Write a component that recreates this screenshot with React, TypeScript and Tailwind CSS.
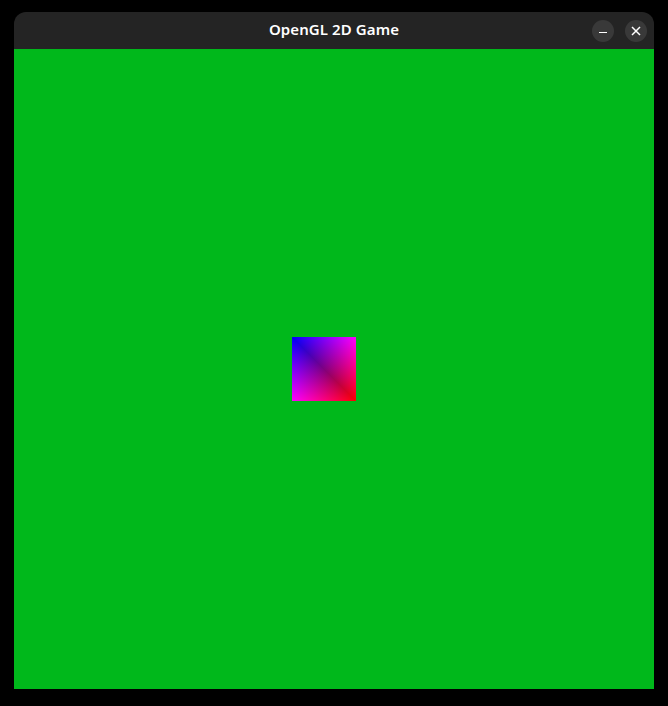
import React from 'react';

const GradientQuad: React.FC = () => {
  // two triangles split along the TL-BR diagonal, like the GL quad
  return (
    <div className="relative w-[64px] h-[64px] bg-[linear-gradient(to_bottom,#000000,#ff0000),linear-gradient(to_right,#0000ff,#000000)] bg-blend-screen">
      <div
        className="absolute inset-0 bg-[linear-gradient(to_right,#000000,#ff0000),linear-gradient(to_bottom,#0000ff,#000000)] bg-blend-screen [clip-path:polygon(0_0,100%_0,100%_100%)]"
      />
    </div>
  );
};

export default function App() {
  return (
    <div className="w-[668px] h-[706px] bg-black pl-[14px] pt-[12px]" style={{ fontFamily: '"Noto Sans", "Open Sans", sans-serif' }}>
      <div className="w-[640px] rounded-t-[12px] overflow-hidden">
        <div className="h-[37px] bg-[#242424] grid grid-cols-[1fr_auto_1fr] items-center">
          <div />
          <div className="text-white text-[15px] font-semibold tracking-[0.1px] -mt-[2px]">OpenGL 2D Game</div>
          <div className="flex justify-end items-center gap-[11px] pr-[7px]">
            <button className="w-[22px] h-[22px] rounded-full bg-[#393939] flex items-center justify-center">
              <span className="block w-[8px] h-[1.5px] bg-white mt-[4px]" />
            </button>
            <button className="w-[22px] h-[22px] rounded-full bg-[#393939] flex items-center justify-center">
              <svg width="10" height="10" viewBox="0 0 10 10">
                <path d="M1 1 L9 9 M9 1 L1 9" stroke="white" strokeWidth="1.5" />
              </svg>
            </button>
          </div>
        </div>
        <div className="h-[640px] bg-[#00b81b] flex items-center justify-center pr-[20px]">
          <GradientQuad />
        </div>
      </div>
    </div>
  );
}
